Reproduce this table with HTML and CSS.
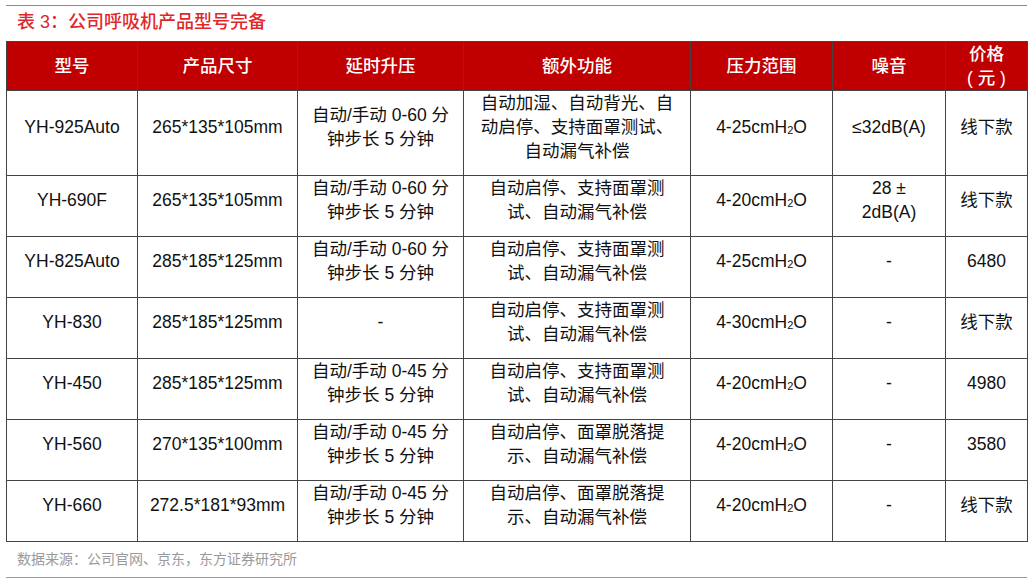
FILE: index.html
```html
<!DOCTYPE html>
<html lang="zh-CN">
<head>
<meta charset="utf-8">
<title>表 3：公司呼吸机产品型号完备</title>
<link rel="stylesheet" href="styles.css">
</head>
<body>
<div class="page">
  <div class="rule-top"></div>
  <h1 class="title">表 3：公司呼吸机产品型号完备</h1>
  <table class="spec">
    <colgroup>
      <col class="c1"><col class="c2"><col class="c3"><col class="c4"><col class="c5"><col class="c6"><col class="c7">
    </colgroup>
    <thead>
      <tr>
        <th>型号</th><th>产品尺寸</th><th>延时升压</th><th>额外功能</th><th>压力范围</th><th>噪音</th><th>价格<br>( 元 )</th>
      </tr>
    </thead>
    <tbody>
      <tr class="tall">
        <td>YH-925Auto</td><td>265*135*105mm</td><td>自动/手动 0-60 分<br>钟步长 5 分钟</td>
        <td>自动加湿、自动背光、自<br>动启停、支持面罩测试、<br>自动漏气补偿</td>
        <td>4-25cmH<span class="sub">2</span>O</td><td>≤32dB(A)</td><td>线下款</td>
      </tr>
      <tr>
        <td>YH-690F</td><td>265*135*105mm</td><td>自动/手动 0-60 分<br>钟步长 5 分钟</td>
        <td>自动启停、支持面罩测<br>试、自动漏气补偿</td>
        <td>4-20cmH<span class="sub">2</span>O</td><td>28 ±<br>2dB(A)</td><td>线下款</td>
      </tr>
      <tr>
        <td>YH-825Auto</td><td>285*185*125mm</td><td>自动/手动 0-60 分<br>钟步长 5 分钟</td>
        <td>自动启停、支持面罩测<br>试、自动漏气补偿</td>
        <td>4-25cmH<span class="sub">2</span>O</td><td>-</td><td>6480</td>
      </tr>
      <tr>
        <td>YH-830</td><td>285*185*125mm</td><td>-</td>
        <td>自动启停、支持面罩测<br>试、自动漏气补偿</td>
        <td>4-30cmH<span class="sub">2</span>O</td><td>-</td><td>线下款</td>
      </tr>
      <tr>
        <td>YH-450</td><td>285*185*125mm</td><td>自动/手动 0-45 分<br>钟步长 5 分钟</td>
        <td>自动启停、支持面罩测<br>试、自动漏气补偿</td>
        <td>4-20cmH<span class="sub">2</span>O</td><td>-</td><td>4980</td>
      </tr>
      <tr>
        <td>YH-560</td><td>270*135*100mm</td><td>自动/手动 0-45 分<br>钟步长 5 分钟</td>
        <td>自动启停、面罩脱落提<br>示、自动漏气补偿</td>
        <td>4-20cmH<span class="sub">2</span>O</td><td>-</td><td>3580</td>
      </tr>
      <tr>
        <td>YH-660</td><td>272.5*181*93mm</td><td>自动/手动 0-45 分<br>钟步长 5 分钟</td>
        <td>自动启停、面罩脱落提<br>示、自动漏气补偿</td>
        <td>4-20cmH<span class="sub">2</span>O</td><td>-</td><td>线下款</td>
      </tr>
    </tbody>
  </table>
  <p class="source">数据来源：公司官网、京东，东方证券研究所</p>
  <div class="rule-bottom"></div>
</div>
</body>
</html>
```

FILE: styles.css
```css
html, body {
  margin: 0;
  padding: 0;
  background: #ffffff;
}

body {
  font-family: "Liberation Sans", "Noto Sans CJK SC", sans-serif;
  color: #111111;
}

.page {
  width: 1021px;
  padding: 5px 6px 0 6px;
}

.rule-top {
  height: 0;
  border-top: 1px solid #e8625c;
}

.title {
  margin: 0;
  height: 35px;
  line-height: 32px;
  padding-left: 11px;
  font-size: 18px;
  font-weight: 500;
  color: #e0282c;
}

.spec {
  width: 1021px;
  table-layout: fixed;
  border-collapse: collapse;
  font-size: 17.5px;
  line-height: 24px;
}

.c1 { width: 131px; }
.c2 { width: 160px; }
.c3 { width: 166px; }
.c4 { width: 227px; }
.c5 { width: 142px; }
.c6 { width: 113px; }
.c7 { width: 82px; }

.spec th,
.spec td {
  border: 1px solid #444444;
  text-align: center;
  vertical-align: middle;
}

.spec th {
  background: #c00000;
  color: #ffffff;
  font-weight: 500;
  height: 47px;
  padding: 0 4px;
}

.spec td {
  height: 47px;
  padding: 0 4px 12px 4px;
  color: #111111;
}

.spec tr.tall td {
  height: 71px;
}

.sub {
  font-size: 11px;
  vertical-align: -1px;
  line-height: 0;
}

.source {
  margin: 0;
  height: 35px;
  line-height: 35px;
  padding-left: 11px;
  font-size: 14px;
  color: #9a9a9a;
}

.rule-bottom {
  height: 0;
  border-top: 1px solid #e57a74;
}
```
